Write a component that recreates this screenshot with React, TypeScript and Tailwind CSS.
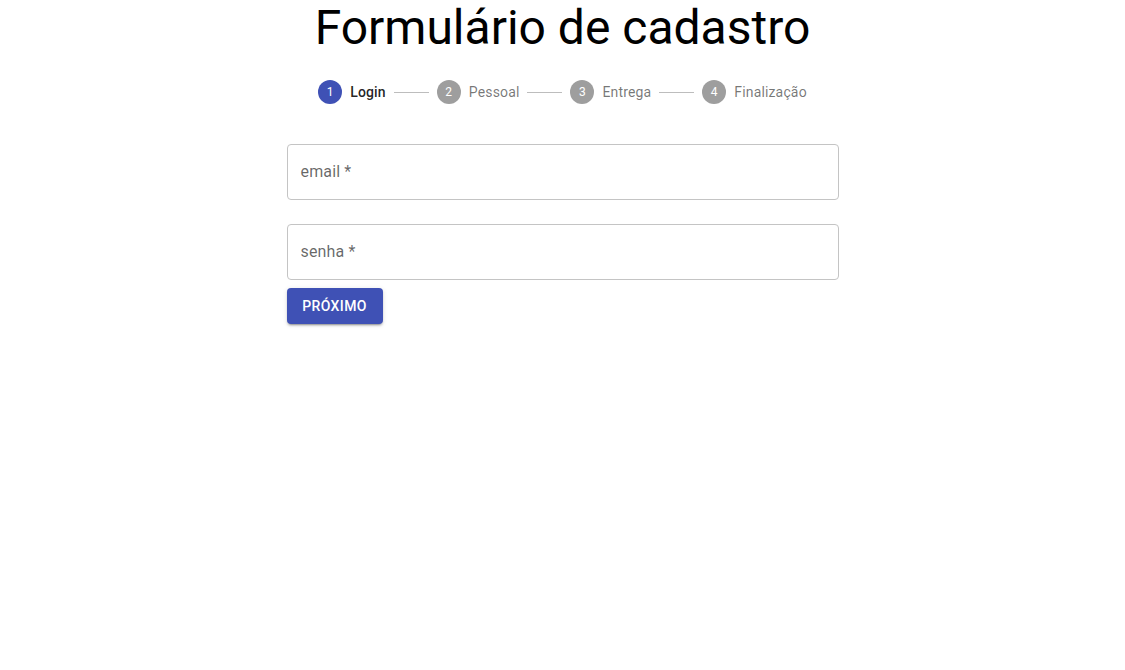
import React from "react";

const steps = ["Login", "Pessoal", "Entrega", "Finalização"];

export default function App() {
  return (
    <div className="min-h-[670px] bg-white flex flex-col items-center" style={{ fontFamily: "Roboto, 'Liberation Sans', sans-serif" }}>
      <h1 className="text-[48px] leading-[56px] font-normal text-black m-0">Formulário de cadastro</h1>
      <div className="flex items-center p-6">
        {steps.map((s, i) => (
          <React.Fragment key={s}>
            {i > 0 && <div className="w-[35px] h-px bg-[#bdbdbd]" />}
            <div className="flex items-center px-2">
              <div className={`w-6 h-6 rounded-full flex items-center justify-center text-[12px] tracking-[0.4px] text-white ${i === 0 ? "bg-[#3f51b5]" : "bg-[#9e9e9e]"}`}>
                {i + 1}
              </div>
              <span className={`ml-2 text-[14px] leading-[20px] tracking-[0.15px] ${i === 0 ? "text-[rgba(0,0,0,0.87)] font-medium" : "text-[rgba(0,0,0,0.54)]"}`}>{s}</span>
            </div>
          </React.Fragment>
        ))}
      </div>
      <div className="w-[552px] flex flex-col mt-4">
        <div className="h-14 border border-[#c4c4c4] rounded flex items-center px-[13px] text-[16px] tracking-[0.15px] text-[rgba(0,0,0,0.6)]">email *</div>
        <div className="h-14 mt-6 border border-[#c4c4c4] rounded flex items-center px-[13px] text-[16px] tracking-[0.15px] text-[rgba(0,0,0,0.6)]">senha *</div>
        <div className="mt-2">
          <button className="h-9 w-24 bg-[#3f51b5] text-white rounded text-[14px] font-medium tracking-[0.4px] shadow-[0_3px_1px_-2px_rgba(0,0,0,0.2),0_2px_2px_0_rgba(0,0,0,0.14),0_1px_5px_0_rgba(0,0,0,0.12)]">PRÓXIMO</button>
        </div>
      </div>
    </div>
  );
}
